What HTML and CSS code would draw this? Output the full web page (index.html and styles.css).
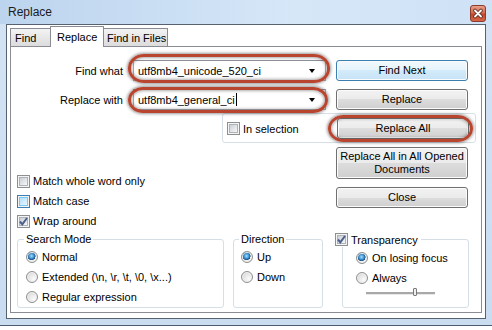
FILE: index.html
```html
<!DOCTYPE html>
<html lang="en">

<head>
    <meta charset="UTF-8" />
    <title>Replace</title>
    <link rel="stylesheet" href="styles.css">
</head>

<body>
    <div class="window">
        <div class="titlebar">
            <span class="title">Replace</span>
            <span class="close-x">
                <svg width="16" height="17" viewBox="0 0 16 17">
                    <defs>
                        <linearGradient id="red" x1="0" y1="0" x2="0" y2="1">
                            <stop offset="0" stop-color="#e9a48f" />
                            <stop offset="0.45" stop-color="#d66b4f" />
                            <stop offset="0.55" stop-color="#c5462b" />
                            <stop offset="1" stop-color="#d8694b" />
                        </linearGradient>
                    </defs>
                    <rect x="0.5" y="0.5" width="15" height="16" rx="2.5" fill="url(#red)" stroke="#8b3c2c" />
                    <path d="M5 5.5 L11 11.5 M11 5.5 L5 11.5" stroke="#5a2a20" stroke-width="3.6" stroke-linecap="round" />
                    <path d="M5 5.5 L11 11.5 M11 5.5 L5 11.5" stroke="#fff" stroke-width="1.8" stroke-linecap="round" />
                </svg>
            </span>
        </div>

        <div class="client">
            <div class="tabs">
                <div class="tab tab-find">Find</div>
                <div class="tab active">Replace</div>
                <div class="tab tab-files">Find in Files</div>
            </div>

            <div class="panel">
                <div class="field-row first">
                    <span class="field-label">Find what</span>
                    <div class="combo mark mark-find">
                        <span class="combo-text">utf8mb4_unicode_520_ci</span>
                        <span class="arrow"></span>
                    </div>
                    <button class="btn default">Find Next</button>
                </div>

                <div class="field-row">
                    <span class="field-label">Replace with</span>
                    <div class="combo mark mark-replace">
                        <span class="combo-text">utf8mb4_general_ci<span class="caret"></span></span>
                        <span class="arrow"></span>
                    </div>
                    <button class="btn">Replace</button>
                </div>

                <div class="selection-box">
                    <label class="check"><span class="box"></span>In selection</label>
                    <button class="btn mark mark-all">Replace All</button>
                </div>

                <div class="options-row">
                    <div class="checks">
                        <label class="check"><span class="box"></span>Match whole word only</label>
                        <label class="check"><span class="box hover"></span>Match case</label>
                        <label class="check"><span class="box checked">
                                <svg width="11" height="11" viewBox="0 0 11 11">
                                    <path d="M2 5.5 L4.3 8.3 L9 2" fill="none" stroke="#4b5f8c" stroke-width="2" />
                                </svg>
                            </span>Wrap around</label>
                    </div>
                    <div class="buttons">
                        <button class="btn tall">Replace All in All Opened<br>Documents</button>
                        <button class="btn">Close</button>
                    </div>
                </div>

                <div class="groups">
                    <div class="group search-mode">
                        <div class="group-title">Search Mode</div>
                        <div class="radio-row"><span class="radio on"></span>Normal</div>
                        <div class="radio-row"><span class="radio"></span>Extended (\n, \r, \t, \0, \x...)</div>
                        <div class="radio-row"><span class="radio"></span>Regular expression</div>
                    </div>

                    <div class="group direction">
                        <div class="group-title">Direction</div>
                        <div class="radio-row"><span class="radio on"></span>Up</div>
                        <div class="radio-row"><span class="radio"></span>Down</div>
                    </div>

                    <div class="group transparency">
                        <div class="group-title check-title">
                            <span class="box checked">
                                <svg width="11" height="11" viewBox="0 0 11 11">
                                    <path d="M2 5.5 L4.3 8.3 L9 2" fill="none" stroke="#4b5f8c" stroke-width="2" />
                                </svg>
                            </span>Transparency
                        </div>
                        <div class="radio-row"><span class="radio on"></span>On losing focus</div>
                        <div class="radio-row"><span class="radio"></span>Always</div>
                        <div class="slider">
                            <span class="thumb"></span>
                        </div>
                    </div>
                </div>
            </div>
        </div>
    </div>
</body>

</html>
```

FILE: styles.css
```css
* {
    box-sizing: border-box;
}

body {
    margin: 0;
    background: #fff;
    font-family: 'Liberation Sans', Arial, sans-serif;
    font-size: 11px;
    color: #000;
}

.window {
    width: 492px;
    height: 326px;
    background: linear-gradient(to bottom, #bcd3ec 0, #d3e3f4 24px, #c9dcf0 100%);
    border-bottom: 1px solid #4a5d73;
    overflow: hidden;
}

.titlebar {
    height: 24px;
    display: flex;
    align-items: center;
    justify-content: space-between;
    padding: 0 6px 0 8px;
    background: linear-gradient(to right, #bcd4ee, #d6e7f8 60%, #cfe2f6);
}

.title {
    font-size: 12px;
    color: #1b1b1b;
}

.close-x {
    display: block;
    height: 17px;
    margin-top: 2px;
}

.close-x svg {
    display: block;
}

.client {
    margin: 0 6px;
    width: 480px;
    height: 295px;
    border: 1px solid #56626f;
    background: #fff;
}

/* tabs */
.tabs {
    display: flex;
    align-items: flex-end;
    height: 21px;
    margin-left: 3px;
}

.tab {
    height: 18px;
    display: flex;
    align-items: center;
    border: 1px solid #898c95;
    border-bottom: none;
    background: linear-gradient(#f3f3f3, #dcdcdc);
    padding-top: 1px;
}

.tab-find {
    width: 41px;
    padding-left: 4px;
}

.tab.active {
    position: relative;
    z-index: 1;
    height: 21px;
    width: 54px;
    margin-left: -1px;
    margin-bottom: -1px;
    padding-left: 6px;
    padding-top: 0;
    padding-bottom: 1px;
    background: #fff;
}

.tab-files {
    width: 65px;
    margin-left: -1px;
    padding-left: 3px;
}

.panel {
    margin-left: 3px;
    width: 472px;
    height: 267px;
    border: 1px solid #898c95;
    background: #fff;
}

/* find / replace rows */
.field-row {
    display: flex;
    align-items: center;
    margin-top: 8px;
}

.field-row.first {
    margin-top: 13px;
}

.field-label {
    width: 113px;
    text-align: right;
    padding-right: 1px;
}

.combo {
    width: 193px;
    height: 21px;
    margin-left: 9px;
    display: flex;
    align-items: center;
    justify-content: space-between;
    border: 1px solid #abadb3;
    border-top-color: #8d9098;
    padding: 0 10px 0 4px;
    background: #fff;
}

.combo-text {
    display: flex;
    align-items: center;
    white-space: nowrap;
}

.caret {
    display: inline-block;
    width: 1px;
    height: 13px;
    margin-left: 1px;
    background: #000;
}

.arrow {
    width: 0;
    height: 0;
    border-left: 3.5px solid transparent;
    border-right: 3.5px solid transparent;
    border-top: 4px solid #000;
    margin-top: 1px;
}

.btn {
    width: 132px;
    height: 21px;
    margin-left: 10px;
    padding: 0;
    font: inherit;
    color: #000;
    border: 1px solid #707070;
    border-radius: 3px;
    background: linear-gradient(#f2f2f2 0, #ebebeb 50%, #dddddd 50%, #cfcfcf 100%);
    box-shadow: inset 0 0 0 1px #fbfbfb;
    line-height: 13px;
}

.btn.default {
    border-color: #3c7fb1;
    background: linear-gradient(#f2f9fe 0, #e5f3fc 50%, #d3ebfa 50%, #c6e3f6 100%);
}

.btn.tall {
    height: 32px;
}

/* red annotation rings */
.mark {
    position: relative;
}

.mark::after {
    content: "";
    position: absolute;
    border: 3px solid #b9452f;
    border-radius: 16px / 14px;
    box-shadow: 0 0 3px 1px rgba(70, 70, 70, 0.55), inset 0 0 3px 1px rgba(70, 70, 70, 0.45);
    pointer-events: none;
}

.mark-find::after {
    top: -7px;
    bottom: -3px;
    left: -6px;
    right: -5px;
}

.mark-replace::after {
    top: -3px;
    bottom: -4px;
    left: -6px;
    right: -3px;
}

.mark-all::after {
    top: -4px;
    bottom: -4px;
    left: -10px;
    right: -5px;
}

/* in selection box */
.selection-box {
    display: flex;
    align-items: flex-start;
    justify-content: space-between;
    width: 254px;
    height: 30px;
    margin: 3px 0 0 211px;
    padding: 4px 6px 0 4px;
    border: 1px solid #d5dfe5;
    border-radius: 3px;
}

.selection-box .check {
    height: 21px;
}

.selection-box .btn,
.buttons .btn {
    margin-left: 0;
}

/* checkboxes */
.check {
    display: flex;
    align-items: center;
    gap: 3px;
}

.box {
    position: relative;
    width: 13px;
    height: 13px;
    flex: none;
    border: 1px solid #8e8f8f;
    background: #f4f4f4;
}

.box::before {
    content: "";
    position: absolute;
    inset: 1px;
    border: 1px solid #aeb3b9;
    background: linear-gradient(135deg, #cbcfd5, #f7f7f7);
}

.box.hover {
    border-color: #3c7fb1;
}

.box.hover::before {
    border-color: #79c6f9;
    background: linear-gradient(135deg, #b1dffd, #e9f7fe);
}

.box svg {
    position: absolute;
    left: 0;
    top: 0;
}

.options-row {
    display: flex;
    margin-top: 4px;
}

.checks {
    width: 325px;
    padding: 24px 0 0 6px;
}

.checks .check {
    height: 20px;
}

.buttons {
    display: flex;
    flex-direction: column;
    gap: 8px;
}

/* groups */
.groups {
    display: flex;
    align-items: flex-start;
    margin-top: 8px;
}

.group {
    height: 69px;
    border: 1px solid #d5dfe5;
    border-radius: 3px;
}

.group-title {
    width: fit-content;
    height: 14px;
    line-height: 14px;
    margin: -8px 0 0 6px;
    padding: 0 2px;
    background: #fff;
}

.search-mode {
    width: 207px;
    margin-left: 6px;
    padding-left: 8px;
}

.direction {
    width: 90px;
    margin-left: 9px;
    padding-left: 7px;
}

.transparency {
    width: 127px;
    margin-left: 19px;
    padding-left: 13px;
}

.search-mode .group-title,
.direction .group-title {
    margin-left: -2px;
}

.check-title {
    display: flex;
    align-items: center;
    gap: 3px;
    height: 15px;
    margin-left: -21px;
    padding: 0 3px 0 0;
}

.radio-row {
    display: flex;
    align-items: center;
    gap: 4px;
    height: 20px;
}

.group-title + .radio-row {
    margin-top: 1px;
}

.radio {
    width: 12px;
    height: 12px;
    flex: none;
    border-radius: 50%;
    border: 1px solid #8e8f8f;
    background: radial-gradient(circle at 70% 70%, #fbfbfb 0, #e2e2e2 60%, #c9c9c9 100%);
    box-shadow: inset 0 0 0 1px #f2f2f2;
}

.radio.on {
    background: radial-gradient(circle at 45% 40%, #a6e0fc 0, #3d93d4 30%, #1c4f83 48%, #f2f2f2 52%, #d8d8d8 100%);
}

.slider {
    position: relative;
    width: 69px;
    height: 10px;
    margin: -1px 0 0 10px;
    border-top: 4px solid #fff;
}

.slider::before {
    content: "";
    position: absolute;
    left: 0;
    right: 0;
    top: 1px;
    height: 2px;
    background: #a8a8a8;
    border-bottom: 1px solid #e8e8e8;
}

.thumb {
    position: absolute;
    left: 47px;
    top: -3px;
    width: 4px;
    height: 8px;
    border: 1px solid #7a7a7a;
    border-radius: 1px;
    background: #eee;
}
```
